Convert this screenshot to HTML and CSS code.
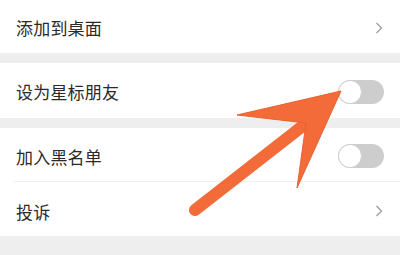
FILE: index.html
```html
<!DOCTYPE html>
<html lang="zh">
<head>
<meta charset="utf-8">
<link rel="stylesheet" href="styles.css">
</head>
<body>
<div class="page">
  <div class="group first">
    <div class="row">
      <span class="label">添加到桌面</span>
      <svg class="chev" width="8" height="12" viewBox="0 0 8 12"><path d="M1.5 1 L6.5 6 L1.5 11" fill="none" stroke="#a0a0a0" stroke-width="1.4"/></svg>
    </div>
  </div>
  <div class="group">
    <div class="row r2">
      <span class="label">设为星标朋友</span>
      <span class="toggle"><span class="knob"></span></span>
    </div>
  </div>
  <div class="group">
    <div class="row r3 divided">
      <span class="label">加入黑名单</span>
      <span class="toggle"><span class="knob"></span></span>
    </div>
    <div class="row r4">
      <span class="label">投诉</span>
      <svg class="chev" width="8" height="12" viewBox="0 0 8 12"><path d="M1.5 1 L6.5 6 L1.5 11" fill="none" stroke="#a0a0a0" stroke-width="1.4"/></svg>
    </div>
  </div>
  <svg class="arrow" width="400" height="255" viewBox="0 0 400 255">
    <line x1="195" y1="210" x2="304" y2="125" stroke="#f26b38" stroke-width="12" stroke-linecap="round"/>
    <polygon points="341,91 237,115 306,123 297,188" fill="#f26b38" stroke="#e86230" stroke-width="1" stroke-linejoin="miter"/>
  </svg>
</div>
</body>
</html>
```
FILE: styles.css
```css
html, body {
  margin: 0;
  padding: 0;
  background: #eeeeee;
}
.page {
  position: relative;
  width: 400px;
  height: 255px;
  overflow: hidden;
  background: #eeeeee;
  font-family: "Noto Sans CJK SC", "Noto Sans", sans-serif;
}
.group {
  background: #ffffff;
  margin-top: 10px;
}
.group.first {
  margin-top: 0;
}
.row {
  height: 54px;
  display: flex;
  align-items: center;
  justify-content: space-between;
  padding: 0 17px 0 16px;
  box-sizing: border-box;
}
.first .row {
  height: 53px;
  padding-top: 2px;
}
.r2 {
  height: 55px;
  padding-top: 2px;
}
.r3 {
  padding-top: 2px;
}
.r4 {
  padding-top: 4px;
}
.divided {
  position: relative;
}
.divided::after {
  content: "";
  position: absolute;
  left: 14px;
  right: 0;
  bottom: 0;
  height: 1px;
  background: #f0f0f0;
}
.label {
  font-size: 17px;
  color: #2a2a2a;
  letter-spacing: 0.2px;
}
.chev {
  display: block;
}
.toggle {
  position: relative;
  width: 46px;
  height: 24px;
  border-radius: 12px;
  background: #cdcdcd;
  margin-right: -1px;
}
.knob {
  position: absolute;
  left: 0;
  top: 0;
  width: 24px;
  height: 24px;
  border-radius: 50%;
  background: #ffffff;
  box-sizing: border-box;
  border: 1px solid #cfcfcf;
}
.arrow {
  position: absolute;
  left: 0;
  top: 0;
}
```
